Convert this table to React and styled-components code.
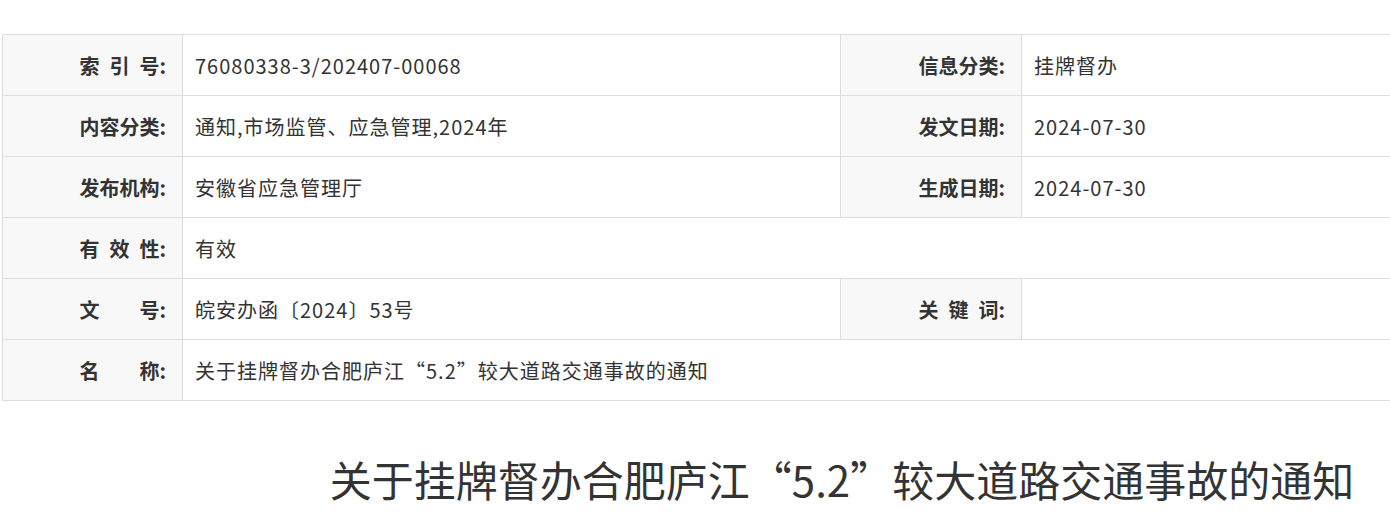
import React from "react";
import styled, { createGlobalStyle } from "styled-components";

const GlobalStyle = createGlobalStyle`
  html, body {
    margin: 0;
    padding: 0;
    background: #fff;
    overflow: hidden;
  }
  body {
    font-family: "Noto Sans CJK SC", "Noto Sans", sans-serif;
    color: #333;
  }
`;

const Page = styled.div`
  width: 1680px;
  padding: 34px 0 0 2px;
`;

const InfoTable = styled.table`
  width: 1400px;
  border-collapse: collapse;
  table-layout: fixed;
  font-size: 20px;
  color: #333;
`;

const Col = styled.col`
  width: ${(p) => (p.$w ? `${p.$w}px` : "auto")};
`;

const Label = styled.th`
  height: 61px;
  padding: 0 16px 0 0;
  background: #f8f8f8;
  border: 1px solid #ddd;
  text-align: right;
  font-weight: 700;
  white-space: pre;
  box-sizing: border-box;
`;

const Value = styled.td`
  height: 61px;
  padding: 0 0 0 12px;
  border: 1px solid #ddd;
  text-align: left;
  font-weight: 400;
  letter-spacing: 1px;
  box-sizing: border-box;
`;

const Title = styled.h1`
  margin: 48px 0 0;
  text-align: center;
  font-size: 42px;
  font-weight: 400;
  line-height: 60px;
  color: #333;
`;

const rows = [
  [["索\u2002引\u2002号:", "76080338-3/202407-00068"], ["信息分类:", "挂牌督办"]],
  [["内容分类:", "通知,市场监管、应急管理,2024年"], ["发文日期:", "2024-07-30"]],
  [["发布机构:", "安徽省应急管理厅"], ["生成日期:", "2024-07-30"]],
  [["有\u2002效\u2002性:", "有效"]],
  [["文\u3000\u3000号:", "皖安办函〔2024〕53号"], ["关\u2002键\u2002词:", ""]],
  [["名\u3000\u3000称:", "关于挂牌督办合肥庐江“5.2”较大道路交通事故的通知"]],
];

export default function App() {
  return (
    <>
      <GlobalStyle />
      <Page>
        <InfoTable>
          <colgroup>
            <Col $w={180} />
            <Col $w={658} />
            <Col $w={181} />
            <Col />
          </colgroup>
          <tbody>
            {rows.map((row, i) => (
              <tr key={i}>
                {row.map(([label, value], j) => (
                  <React.Fragment key={j}>
                    <Label>{label}</Label>
                    <Value colSpan={row.length === 1 ? 3 : 1}>{value}</Value>
                  </React.Fragment>
                ))}
              </tr>
            ))}
          </tbody>
        </InfoTable>
        <Title>关于挂牌督办合肥庐江“5.2”较大道路交通事故的通知</Title>
      </Page>
    </>
  );
}
